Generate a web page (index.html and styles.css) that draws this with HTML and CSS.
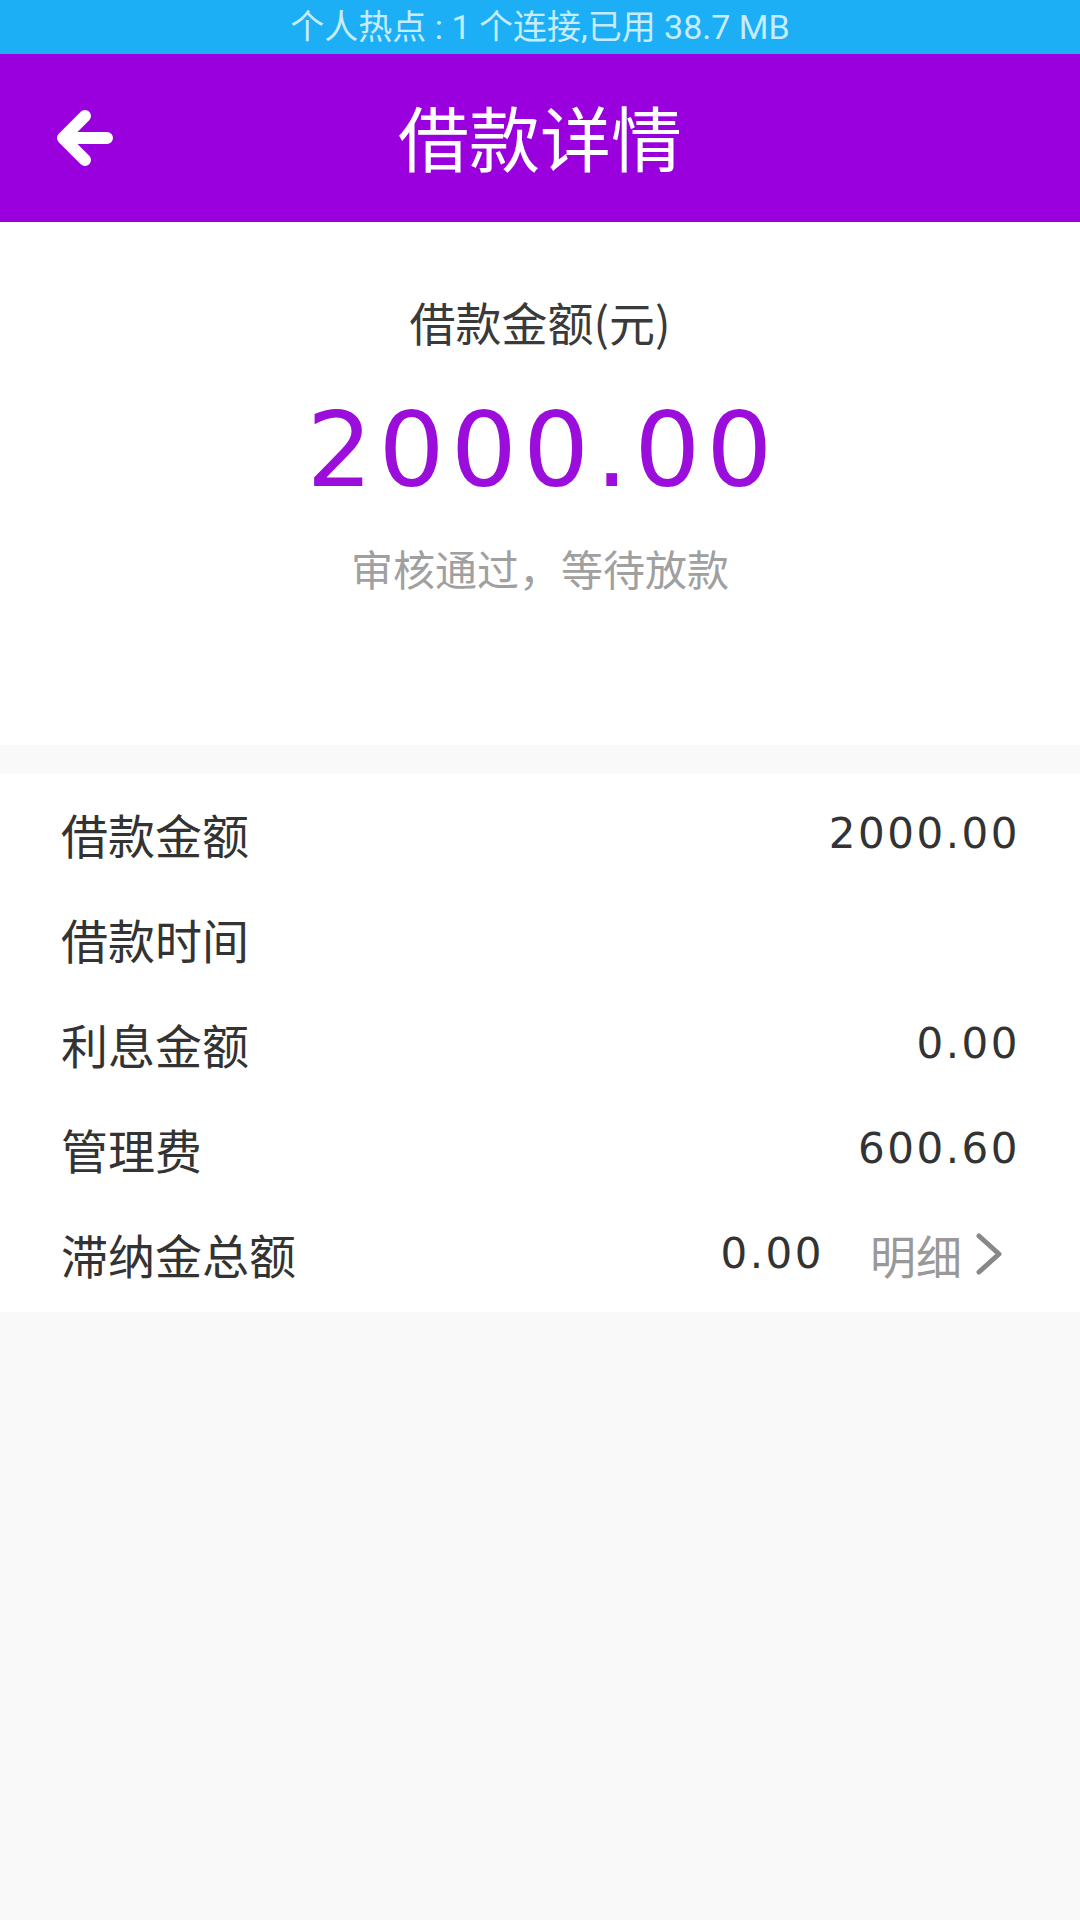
FILE: index.html
```html
<!DOCTYPE html>
<html>
  <head>
    <meta charset="utf-8">
    <title>借款详情</title>
    <link rel="stylesheet" href="styles.css">
  </head>
  <body>
    <div class="status-bar">个人热点 : 1 个连接,已用 38.7 MB</div>

    <div class="header">
      <svg class="back" width="60" height="60" viewBox="0 0 60 60">
        <path d="M30 8 L8 30 L30 52 M8 30 L52 30" fill="none" stroke="#fff" stroke-width="12" stroke-linecap="round" stroke-linejoin="round"/>
      </svg>
      <div class="title">借款详情</div>
    </div>

    <div class="summary">
      <div class="summary-label">借款金额(元)</div>
      <div class="summary-amount">2000.00</div>
      <div class="summary-status">审核通过，等待放款</div>
    </div>

    <div class="detail-list">
      <div class="row">
        <span class="label">借款金额</span>
        <span class="value">2000.00</span>
      </div>
      <div class="row">
        <span class="label">借款时间</span>
        <span class="value"></span>
      </div>
      <div class="row">
        <span class="label">利息金额</span>
        <span class="value">0.00</span>
      </div>
      <div class="row">
        <span class="label">管理费</span>
        <span class="value">600.60</span>
      </div>
      <div class="row">
        <span class="label">滞纳金总额</span>
        <div class="row-right">
          <span class="value">0.00</span>
          <span class="more">明细</span>
          <svg class="chevron" width="45" height="44" viewBox="0 0 45 44">
            <path d="M4 4 L24 22 L4 40" fill="none" stroke="#888" stroke-width="5" stroke-linecap="round" stroke-linejoin="round"/>
          </svg>
        </div>
      </div>
    </div>
  </body>
</html>
```

FILE: styles.css
```css
body {
  margin: 0;
  background-color: #f9f9f9;
  font-family: "Noto Sans CJK SC", "Noto Sans", sans-serif;
  color: #333;
}

.status-bar {
  height: 54px;
  line-height: 54px;
  background-color: #1caff5;
  color: #c6ebfb;
  font-family: Roboto, "Noto Sans CJK SC", sans-serif;
  font-size: 34px;
  text-align: center;
}

.header {
  position: relative;
  height: 168px;
  background-color: #9900dd;
  display: flex;
  align-items: center;
  justify-content: center;
}

.back {
  position: absolute;
  left: 55px;
  top: 54px;
}

.title {
  color: #fff;
  font-size: 71px;
  font-weight: 400;
  line-height: 1;
  margin-top: -6px;
}

.summary {
  background-color: #fff;
  padding: 69px 0 147px;
  text-align: center;
}

.summary-label {
  font-size: 46px;
  line-height: 60px;
  color: #3a3a3a;
}

.summary-amount {
  margin-top: 39px;
  padding-left: 5px;
  font-family: "DejaVu Sans", sans-serif;
  font-size: 104px;
  letter-spacing: 6px;
  line-height: 120px;
  color: #9a0ddb;
}

.summary-status {
  margin-top: 28px;
  font-size: 42px;
  line-height: 60px;
  color: #a0a0a0;
}

.detail-list {
  margin-top: 29px;
  background-color: #fff;
  padding: 7px 0 6px;
}

.row {
  height: 105px;
  display: flex;
  align-items: center;
  justify-content: space-between;
  padding: 0 60px 0 61px;
}

.label {
  font-size: 47px;
  color: #333;
}

.value {
  font-family: "DejaVu Sans", sans-serif;
  font-size: 42px;
  letter-spacing: 2.5px;
  color: #333;
}

.row-right {
  display: flex;
  align-items: center;
}

.more {
  margin-left: 46px;
  margin-right: 13px;
  font-size: 46px;
  color: #999;
}
```
